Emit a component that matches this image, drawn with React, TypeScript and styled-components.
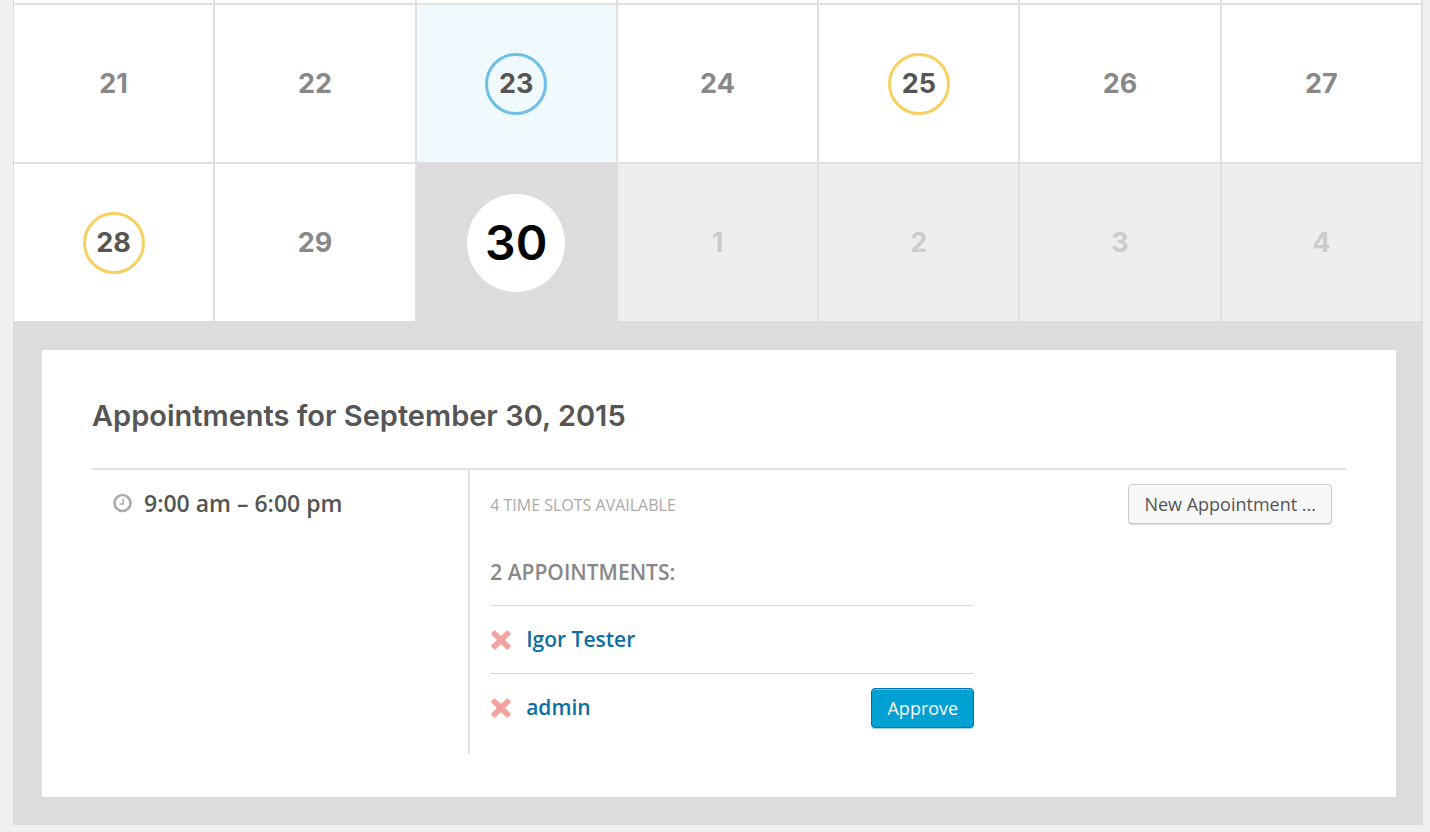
import React from "react";
import styled, { createGlobalStyle, css } from "styled-components";

const GlobalStyle = createGlobalStyle`
  *, *::before, *::after { box-sizing: border-box; }
  body {
    margin: 0;
    background: #f0f0f0;
    color: #555;
    font-family: "Open Sans", "Noto Sans", sans-serif;
  }
`;

const Page = styled.main`
  padding: 0 7px 7px 13px;
`;

const Calendar = styled.section`
  background: #dcdcdc;
`;

const Month = styled.table`
  width: 100%;
  table-layout: fixed;
  border-collapse: separate;
  border-spacing: 0;
  border-left: 1px solid #dcdcdc;
`;

type DayKind = "plain" | "today" | "booked" | "active" | "other";

const DayCell = styled.td<{ $kind: DayKind }>`
  height: 159px;
  padding: 0;
  text-align: center;
  vertical-align: middle;
  border-top: 2px solid #e0e0e0;
  border-right: 2px solid #e0e0e0;
  background: #fff;
  ${({ $kind }) => $kind === "today" && css`background: #f0f9fe;`}
  ${({ $kind }) => $kind === "other" && css`background: #eee;`}
  ${({ $kind }) => $kind === "active" && css`
    background: #dcdcdc;
    border-color: #dcdcdc;
  `}
`;

const EdgeCell = styled.td`
  height: 3px;
  padding: 0;
  background: #fff;
  border-right: 2px solid #e0e0e0;
`;

const DayButton = styled.button<{ $kind: DayKind }>`
  display: inline-flex;
  align-items: center;
  justify-content: center;
  width: 62px;
  height: 62px;
  padding: 0;
  border: 3px solid transparent;
  border-radius: 50%;
  background: transparent;
  color: #888;
  font: 700 27px/32px Inter, sans-serif;
  vertical-align: middle;
  cursor: pointer;
  ${({ $kind }) => $kind === "today" && css`border-color: #6fbee6; color: #555;`}
  ${({ $kind }) => $kind === "booked" && css`border-color: #f8d05f; color: #555;`}
  ${({ $kind }) => $kind === "other" && css`color: #ccc;`}
  ${({ $kind }) => $kind === "active" && css`
    width: 98px;
    height: 98px;
    background: #fff;
    color: #000;
    font-size: 48px;
    font-weight: 600;
    line-height: 56px;
  `}
`;

const Tray = styled.div`
  padding: 29px 27px 28px 29px;
`;

const Panel = styled.article`
  padding: 48px 50px 43px;
  background: #fff;
`;

const Title = styled.h2`
  margin: 0 0 34px;
  color: #555;
  font: 600 29px/36px Inter, sans-serif;
`;

const Slot = styled.div`
  display: grid;
  grid-template-columns: 30% minmax(0, 1fr);
  border-top: 2px solid #e2e2e2;
`;

const SlotTime = styled.div`
  display: flex;
  align-items: center;
  align-self: start;
  gap: 12px;
  padding: 17px 0 0 21px;
  font-size: 23px;
  font-weight: 600;
  line-height: 32px;
`;

const SlotBody = styled.div`
  padding: 14px 14px 13px 20px;
  border-left: 2px solid #e2e2e2;
`;

const SlotHead = styled.div`
  display: flex;
  align-items: center;
  justify-content: space-between;
  height: 40px;
`;

const Available = styled.span`
  padding-top: 2px;
  color: #aaa;
  font-size: 16px;
  line-height: 24px;
`;

const Bookings = styled.div`
  width: 484px;
  max-width: 100%;
`;

const BookingsTitle = styled.h3`
  margin: 0;
  padding: 32px 0 17px;
  color: #888;
  font-size: 21px;
  font-weight: 600;
  line-height: 32px;
`;

const BookingList = styled.ul`
  margin: 0;
  padding: 0;
  list-style: none;
`;

const Booking = styled.li`
  display: flex;
  align-items: center;
  height: 68px;
  border-top: 1px solid #d4dadd;
`;

const RemoveButton = styled.button`
  display: flex;
  margin: 0 15px 0 1px;
  padding: 0;
  border: 0;
  background: none;
  cursor: pointer;
`;

const Person = styled.a`
  flex: 1;
  padding-bottom: 2px;
  color: #0d6ea0;
  font-size: 21px;
  font-weight: 600;
  line-height: 32px;
  text-decoration: none;
`;

const Button = styled.button<{ $primary?: boolean }>`
  height: 40px;
  padding: 0 15px;
  border: 1px solid ${({ $primary }) => ($primary ? "#0073aa" : "#ccc")};
  border-radius: 4px;
  background: ${({ $primary }) => ($primary ? "#00a0d2" : "#f7f7f7")};
  box-shadow: ${({ $primary }) =>
    $primary ? "inset 0 1px 0 #5bc0e6, 0 1px 0 #a8d3e6" : "inset 0 1px 0 #fff, 0 1px 0 #ddd"};
  color: ${({ $primary }) => ($primary ? "#fff" : "#555")};
  font-family: inherit;
  font-size: 18px;
  line-height: 24px;
  cursor: pointer;
`;

const ClockIcon = () => (
  <svg width="19" height="20" viewBox="0 0 19 20" fill="none" stroke="#aaa" aria-hidden="true">
    <circle cx="9.5" cy="10" r="8" strokeWidth="2.6" />
    <path d="M10.2 5.5V10.9H6.5" strokeWidth="1.5" />
  </svg>
);

const CrossIcon = () => (
  <svg width="20" height="20" viewBox="0 0 20 20" aria-hidden="true">
    <path
      d="M4.2 1.1 10 6.3l5.8-5.2q.8-.6 1.5.1l1.9 1.9q.6.7 0 1.4L13.7 10l5.5 5.5q.6.7 0 1.4l-2.2 2.2q-.7.6-1.4 0L10 13.7l-5.6 5.4q-.7.6-1.4 0L.8 16.9q-.6-.7 0-1.4L6.3 10 .8 4.5q-.6-.7 0-1.4l2-2q.7-.6 1.4 0z"
      fill="#f1a3a0"
      stroke="#f1a3a0"
      strokeWidth="0.8"
      strokeLinejoin="round"
    />
  </svg>
);

const weeks: { day: number; kind: DayKind }[][] = [
  [
    { day: 21, kind: "plain" },
    { day: 22, kind: "plain" },
    { day: 23, kind: "today" },
    { day: 24, kind: "plain" },
    { day: 25, kind: "booked" },
    { day: 26, kind: "plain" },
    { day: 27, kind: "plain" },
  ],
  [
    { day: 28, kind: "booked" },
    { day: 29, kind: "plain" },
    { day: 30, kind: "active" },
    { day: 1, kind: "other" },
    { day: 2, kind: "other" },
    { day: 3, kind: "other" },
    { day: 4, kind: "other" },
  ],
];

const bookings = [
  { name: "Igor Tester", pending: false },
  { name: "admin", pending: true },
];

export default function App() {
  return (
    <>
      <GlobalStyle />
      <Page>
        <Calendar>
          <Month>
            <tbody>
              <tr>
                {weeks[0].map(({ day }) => (
                  <EdgeCell key={day} />
                ))}
              </tr>
              {weeks.map((week) => (
                <tr key={week[0].day}>
                  {week.map(({ day, kind }) => (
                    <DayCell key={day} $kind={kind}>
                      <DayButton type="button" $kind={kind}>
                        {day}
                      </DayButton>
                    </DayCell>
                  ))}
                </tr>
              ))}
            </tbody>
          </Month>
          <Tray>
            <Panel>
              <Title>Appointments for September 30, 2015</Title>
              <Slot>
                <SlotTime>
                  <ClockIcon />
                  <span>9:00 am – 6:00 pm</span>
                </SlotTime>
                <SlotBody>
                  <SlotHead>
                    <Available>4 TIME SLOTS AVAILABLE</Available>
                    <Button type="button">New Appointment ...</Button>
                  </SlotHead>
                  <Bookings>
                    <BookingsTitle>2 APPOINTMENTS:</BookingsTitle>
                    <BookingList>
                      {bookings.map(({ name, pending }) => (
                        <Booking key={name}>
                          <RemoveButton type="button" aria-label={`Remove ${name}`}>
                            <CrossIcon />
                          </RemoveButton>
                          <Person href="#">{name}</Person>
                          {pending && (
                            <Button type="button" $primary>
                              Approve
                            </Button>
                          )}
                        </Booking>
                      ))}
                    </BookingList>
                  </Bookings>
                </SlotBody>
              </Slot>
            </Panel>
          </Tray>
        </Calendar>
      </Page>
    </>
  );
}
